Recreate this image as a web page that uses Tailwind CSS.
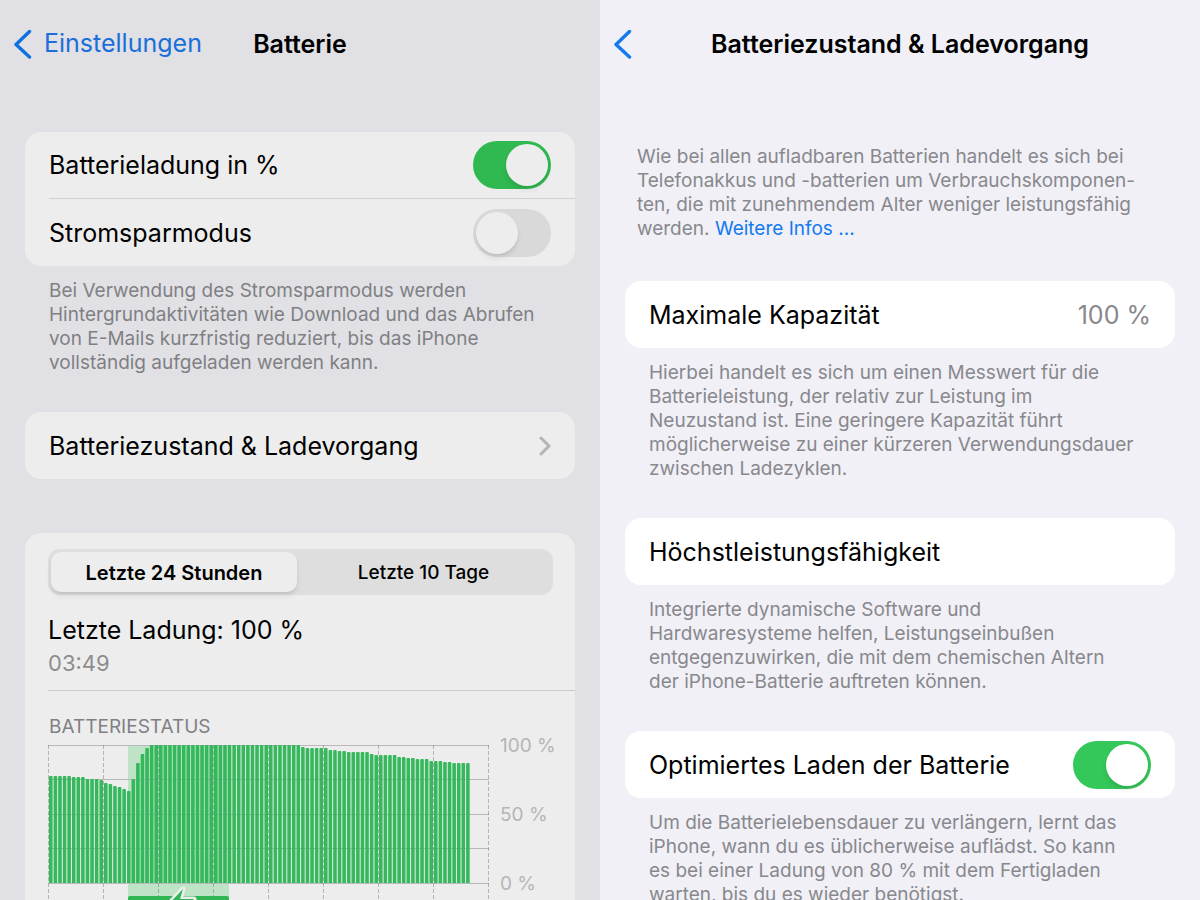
<!DOCTYPE html>
<html lang="de">
<head>
<meta charset="utf-8">
<meta name="viewport" content="width=device-width, initial-scale=1">
<title>Batterie</title>
<script src="https://cdn.jsdelivr.net/npm/@tailwindcss/browser@4"></script>
</head>
<body class="font-[Inter,sans-serif] text-black">
<div class="grid h-screen grid-cols-2 overflow-hidden">

  <section class="overflow-hidden bg-[#e0e0e5]">
    <header class="grid h-[88px] grid-cols-[1fr_auto_1fr] items-center px-3">
      <a href="#einstellungen" class="flex items-center gap-3 text-[25px] text-[#1a6fd8]">
        <svg class="h-[30px] w-5" viewBox="0 0 20 30" fill="none" stroke="#0f70e0" stroke-width="3.4" stroke-linecap="round" stroke-linejoin="round" aria-hidden="true"><path d="M17.500 2.500L4 15.500L17.500 28"/></svg>
        Einstellungen
      </a>
      <h1 class="pt-0.5 text-[25px] font-semibold">Batterie</h1>
    </header>

    <main class="px-[25px] pt-[44px]">
      <div class="rounded-2xl bg-[#ededed] pl-6">
        <div class="flex h-[66px] items-center justify-between pr-6">
          <label for="prozent" class="pt-0.5 text-[25px]">Batterieladung in %</label>
          <input id="prozent" type="checkbox" role="switch" checked class="h-12 w-[78px] appearance-none rounded-full bg-[#d9d9d9] p-[3px] before:block before:size-[42px] before:rounded-full before:bg-[#ededed] before:shadow-md checked:bg-[#30b950] checked:before:ml-[30px]">
        </div>
        <div class="flex h-[68px] items-center justify-between border-t border-[#d0d0d2] pr-6">
          <label for="sparen" class="pt-0.5 text-[25px]">Stromsparmodus</label>
          <input id="sparen" type="checkbox" role="switch" class="h-12 w-[78px] appearance-none rounded-full bg-[#d9d9d9] p-[3px] before:block before:size-[42px] before:rounded-full before:bg-[#ededed] before:shadow-md checked:bg-[#30b950] checked:before:ml-[30px]">
        </div>
      </div>
      <p class="px-6 pt-[13px] text-[19px] leading-[24px] text-[#808084]">Bei Verwendung des Stromsparmodus werden<br>Hintergrundaktivitäten wie Download und das Abrufen<br>von E-Mails kurzfristig reduziert, bis das iPhone<br>vollständig aufgeladen werden kann.</p>

      <a href="#batteriezustand" class="mt-[37px] flex h-[67px] items-center justify-between rounded-2xl bg-[#ededed] px-6 text-[25px]">
        <span class="pt-0.5">Batteriezustand &amp; Ladevorgang</span>
        <svg class="h-5 w-3" viewBox="0 0 12 20" fill="none" stroke="#b4b4b6" stroke-width="3" stroke-linecap="round" stroke-linejoin="round" aria-hidden="true"><path d="M2 2L10 10L2 18"/></svg>
      </a>

      <div class="mt-[54px] rounded-t-2xl bg-[#ededed] pt-4 pl-[23px]">
        <div class="mr-[22px] flex h-[46px] rounded-xl bg-[#dedede] p-[3px]">
          <button type="button" aria-pressed="true" class="w-[246px] rounded-[10px] bg-[#ededed] pt-0.5 text-[20px] font-semibold shadow-md">Letzte 24 Stunden</button>
          <button type="button" aria-pressed="false" class="flex-1 pt-0.5 text-[19px] font-medium">Letzte 10 Tage</button>
        </div>
        <div class="border-b border-[#cacacb] pt-4 pb-3">
          <h2 class="text-[25px] leading-[38px]">Letzte Ladung: 100 %</h2>
          <p class="text-[22px] leading-[29px] text-[#8c8c8f]">03:49</p>
        </div>
        <h3 class="pt-[26px] pl-px text-[19px] leading-[20px] text-[#808084]">BATTERIESTATUS</h3>
        <div class="flex">
          <svg id="chart" class="mt-[7px] h-[160px] w-[442px] shrink-0" viewBox="0 0 442 160" role="img" aria-label="Batteriestatus der letzten 24 Stunden"></svg>
          <div class="flex flex-col gap-[51px] pl-[10px] text-[19px] leading-[18px] text-[#b5b5b7]">
            <span>100 %</span><span>50 %</span><span>0 %</span>
          </div>
        </div>
      </div>
    </main>
  </section>

  <section class="overflow-hidden bg-[#f0f0f6]">
    <header class="grid h-[88px] grid-cols-[1fr_auto_1fr] items-center px-3">
      <a href="#zurueck" aria-label="Zurück">
        <svg class="h-[30px] w-5" viewBox="0 0 20 30" fill="none" stroke="#147aee" stroke-width="3.4" stroke-linecap="round" stroke-linejoin="round" aria-hidden="true"><path d="M17.500 2.500L4 15.500L17.500 28"/></svg>
      </a>
      <h1 class="pt-0.5 text-[25px] font-semibold">Batteriezustand &amp; Ladevorgang</h1>
    </header>

    <main class="px-[25px] pt-[57px]">
      <p class="px-3 text-[19px] leading-[24px] text-[#88888d]">Wie bei allen aufladbaren Batterien handelt es sich bei<br>Telefonakkus und -batterien um Verbrauchskomponen-<br>ten, die mit zunehmendem Alter weniger leistungsfähig<br>werden. <a href="#infos" class="text-[#147aee]">Weitere Infos ...</a></p>

      <div class="mt-10 flex h-[67px] items-center justify-between rounded-2xl bg-white px-6 text-[25px]">
        <h2 class="pt-0.5">Maximale Kapazität</h2>
        <span class="pt-0.5 text-[#88888d]">100 %</span>
      </div>
      <p class="px-6 pt-[13px] text-[19px] leading-[24px] text-[#88888d]">Hierbei handelt es sich um einen Messwert für die<br>Batterieleistung, der relativ zur Leistung im<br>Neuzustand ist. Eine geringere Kapazität führt<br>möglicherweise zu einer kürzeren Verwendungsdauer<br>zwischen Ladezyklen.</p>

      <div class="mt-[37px] flex h-[67px] items-center rounded-2xl bg-white px-6 text-[25px]">
        <h2 class="pt-0.5">Höchstleistungsfähigkeit</h2>
      </div>
      <p class="px-6 pt-[13px] text-[19px] leading-[24px] text-[#88888d]">Integrierte dynamische Software und<br>Hardwaresysteme helfen, Leistungseinbußen<br>entgegenzuwirken, die mit dem chemischen Altern<br>der iPhone-Batterie auftreten können.</p>

      <div class="mt-[37px] flex h-[67px] items-center justify-between rounded-2xl bg-white px-6">
        <label for="optimiert" class="pt-0.5 text-[25px]">Optimiertes Laden der Batterie</label>
        <input id="optimiert" type="checkbox" role="switch" checked class="h-12 w-[78px] appearance-none rounded-full bg-[#e9e9ea] p-[3px] before:block before:size-[42px] before:rounded-full before:bg-white before:shadow-md checked:bg-[#34c759] checked:before:ml-[30px]">
      </div>
      <p class="px-6 pt-[13px] text-[19px] leading-[24px] text-[#88888d]">Um die Batterielebensdauer zu verlängern, lernt das<br>iPhone, wann du es üblicherweise auflädst. So kann<br>es bei einer Ladung von 80 % mit dem Fertigladen<br>warten, bis du es wieder benötigst.</p>
    </main>
  </section>
</div>

<script>
  // Each run is [number of quarter-hour bars, distance of the bar's top from the 100 % line].
  const runs = [[5,31],[3,32],[3,34],[1,35],[1,38],[1,39],[1,41],[1,42],[1,44],[1,46],[1,34],[1,18],[1,9],[1,3],[33,0],[1,2],[5,3],[2,5],[2,6],[5,7],[1,9],[5,10],[2,12],[2,13],[3,14],[3,16],[2,17],[4,18]];
  const step = 55 / 12;
  let s = '<rect x="80" y="1" width="101" height="159" fill="#bfe3c7"/>';
  for (const y of [0, 34, 69, 103, 138]) s += `<path d="M0 ${y + 1.5}H441" stroke="#b9b9bb"/>`;
  for (let x = 0; x < 9; x++) s += `<path d="M${x * 55 + .5} 1V160" stroke="#606060" stroke-opacity=".4" stroke-dasharray="4 2"/>`;
  let i = 0;
  for (const [n, top] of runs) for (let k = 0; k < n; k++, i++)
    s += `<path d="M${(i * step + 1).toFixed(2)} 139V${top + 2}q0 -1 1 -1h1.600q1 0 1 1V139z" fill="#2ab554" fill-opacity=".94"/>`;
  s += '<rect x="80" y="152" width="101" height="12" rx="2" fill="#30b553"/>';
  s += '<path d="M135 145L117 164H128L124 176L146 155H132Z" fill="#30b553" stroke="#ededed" stroke-width="5" stroke-linejoin="round" paint-order="stroke"/>';
  document.getElementById('chart').innerHTML = s;
</script>
</body>
</html>
